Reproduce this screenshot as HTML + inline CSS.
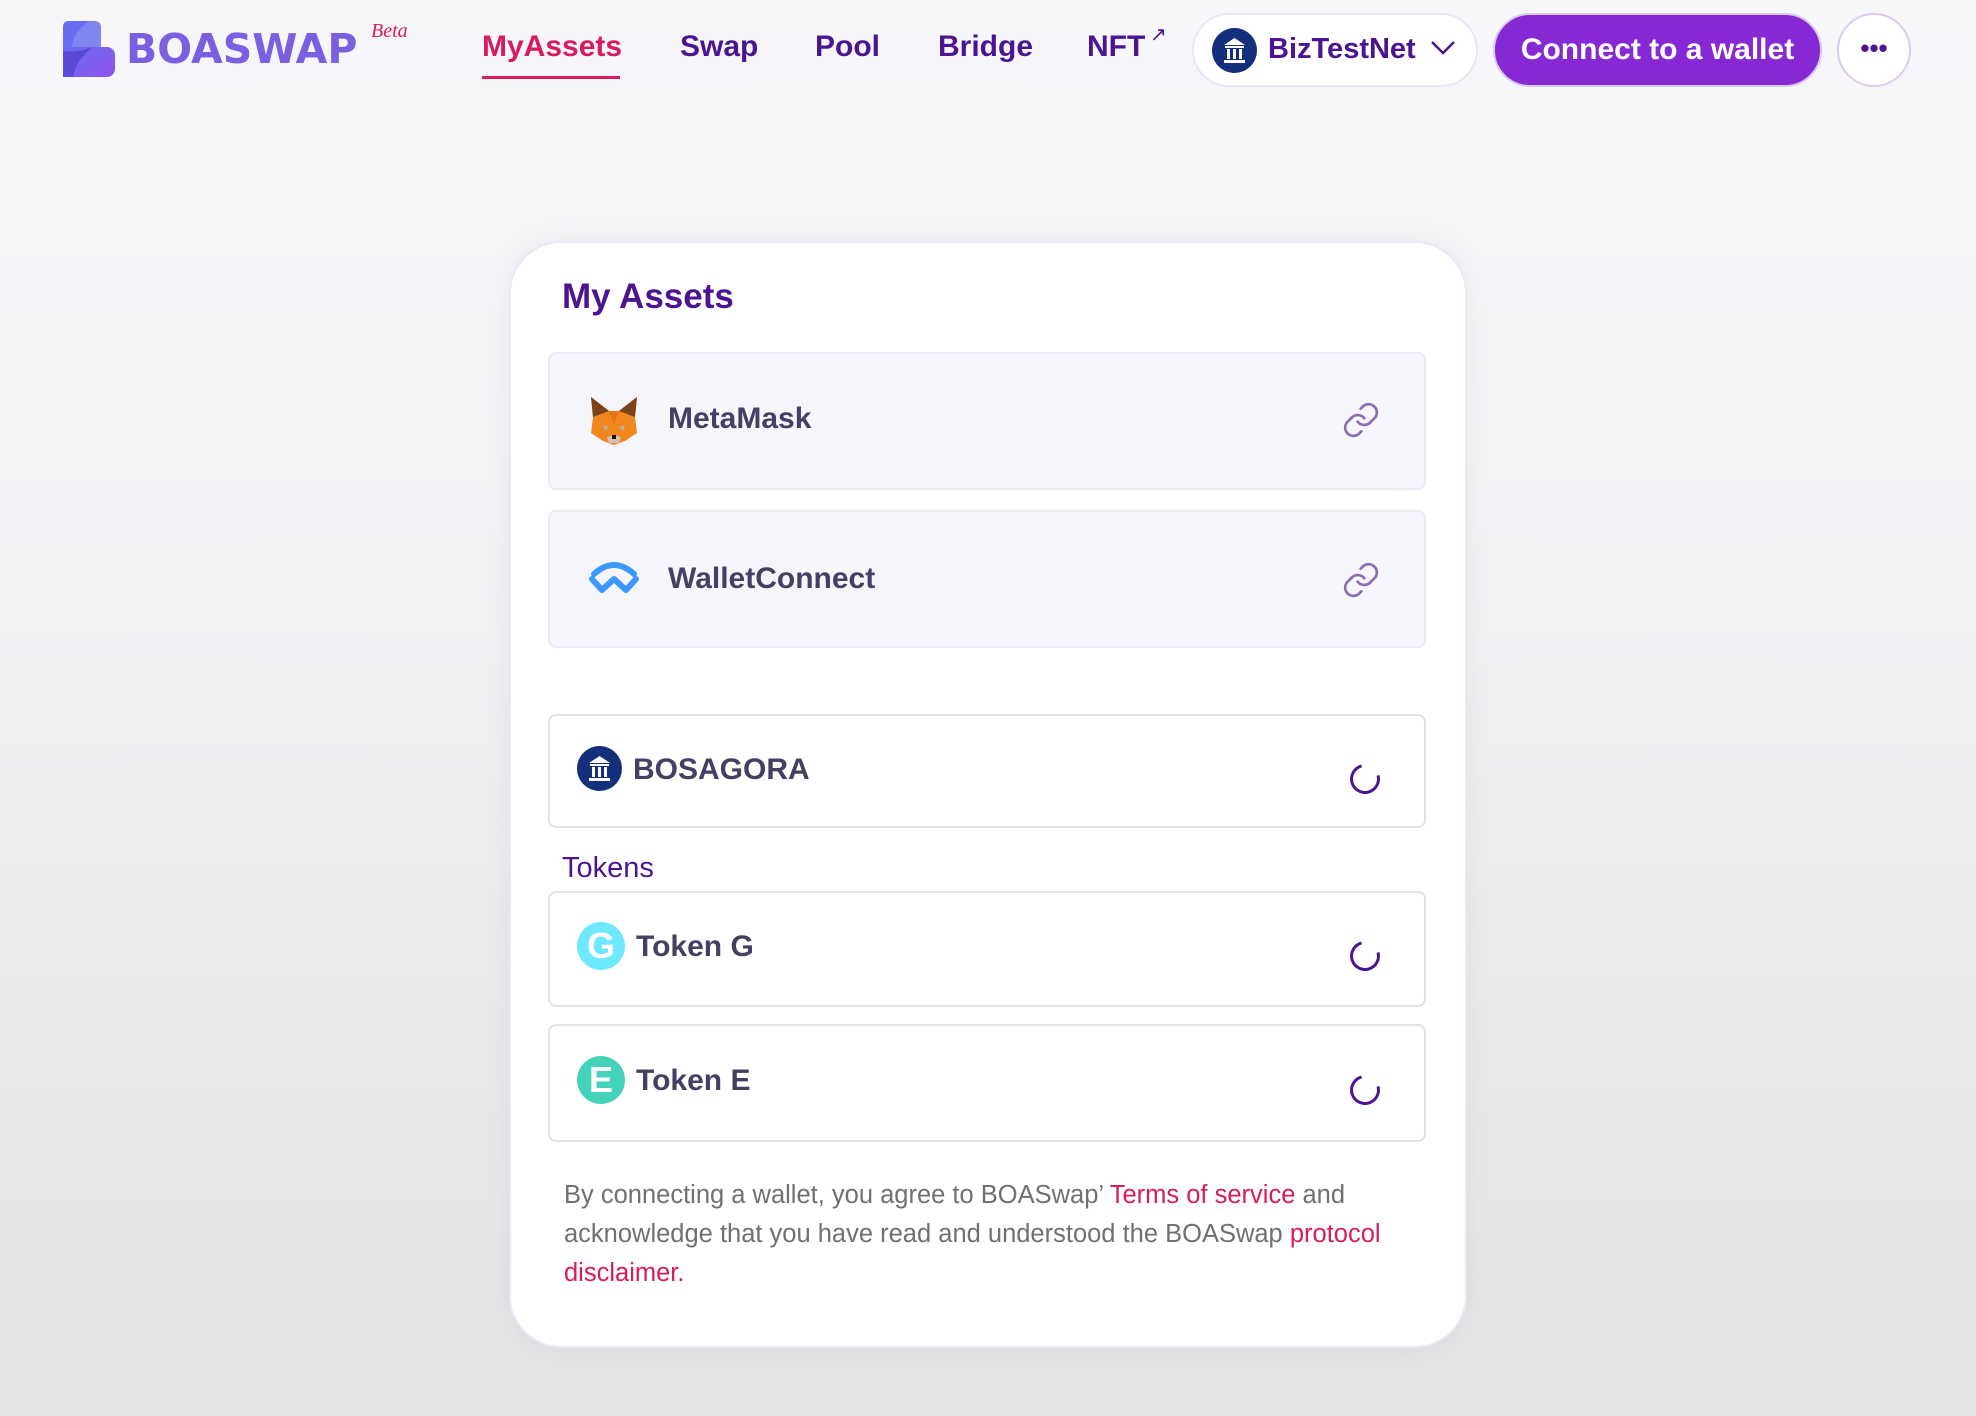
<!DOCTYPE html>
<html><head><meta charset="utf-8"><style>
*{box-sizing:border-box;margin:0;padding:0}
body{width:1976px;height:1416px;overflow:hidden;font-family:"Liberation Sans",Arial,sans-serif;background:linear-gradient(#f7f7fa 0%,#f2f2f5 40%,#e3e3e5 100%);position:relative}
.abs{position:absolute}
.nav{font-size:30px;color:#4b1490;top:30px;font-weight:bold}
.pill{position:absolute;top:13px;height:74px;border-radius:37px}
.card{left:509px;top:241px;width:958px;height:1107px;background:#fff;border:2px solid #ece6f7;border-radius:52px;box-shadow:0 0 30px rgba(0,0,0,.05)}
.wbox{position:absolute;left:548px;width:878px;height:138px;background:#f7f5fc;border:2px solid #ece8f6;border-radius:8px}
.tbox{position:absolute;left:548px;width:878px;background:#fff;border:2px solid #e2e2e4;border-radius:8px}
.lbl{position:absolute;font-size:30px;color:#454063;font-weight:bold}
.spin{position:absolute;width:30px;height:30px;border:3px solid #4b1490;border-top-color:transparent;border-radius:50%;transform:rotate(30deg)}
</style></head><body>
<svg class="abs" style="left:63px;top:21px" width="52" height="56" viewBox="0 0 52 56">
<defs><linearGradient id="g1" x1="0" y1="0" x2="1" y2="1"><stop offset="0" stop-color="#6a6cf2"/><stop offset="1" stop-color="#8f55ea"/></linearGradient></defs>
<rect x="0" y="0" width="38" height="30" rx="6" fill="#8185f0"/>
<path d="M0 6 Q0 0 6 0 L26 0 Q10 10 8 30 L0 30Z" fill="#6a6cf2"/>
<rect x="0" y="26" width="52" height="30" rx="8" fill="url(#g1)"/>
<path d="M0 56 L0 30 Q14 32 30 26 Q12 40 10 56Z" fill="#5a48d8"/>
</svg>
<div class="abs" style="left:126px;top:25px;font-size:41px;font-weight:bold;color:#7b5fe0;letter-spacing:0px;font-family:'DejaVu Sans',sans-serif">BOASWAP</div>
<div class="abs" style="left:371px;top:20px;font-size:20px;color:#d81b60;font-style:italic;font-family:'Liberation Serif',serif">Beta</div>
<div class="abs nav" style="left:482px;color:#d81b5c">MyAssets</div>
<div class="abs" style="left:482px;top:76px;width:138px;height:3px;background:#d81b5c"></div>
<div class="abs nav" style="left:680px">Swap</div>
<div class="abs nav" style="left:815px">Pool</div>
<div class="abs nav" style="left:938px">Bridge</div>
<div class="abs nav" style="left:1087px">NFT</div>
<div class="abs" style="left:1150px;top:22px;font-size:20px;color:#4b1490">↗</div>
<div class="pill" style="left:1192px;width:286px;background:#fff;border:2px solid #ece4f8"></div>
<svg class="abs" style="left:1212px;top:28px" width="45" height="45" viewBox="0 0 45 45"><circle cx="22.5" cy="22.5" r="22.5" fill="#14307a"/><path d="M12 17 L22.5 10 L33 17Z M13 18h19v2H13Z M15 21h3v10h-3Z M21 21h3v10h-3Z M27 21h3v10h-3Z M12 32h21v3H12Z" fill="#fff"/></svg>
<div class="abs" style="left:1268px;top:33px;font-size:29px;color:#4b1490;font-weight:bold">BizTestNet</div>
<svg class="abs" style="left:1430px;top:40px" width="26" height="16"><path d="M2 2 L13 13 L24 2" stroke="#4b1490" stroke-width="2.5" fill="none"/></svg>
<div class="pill" style="left:1493px;width:329px;background:#8629d4;border:2px solid #d8c9ec;color:#fff;font-size:30px;text-align:center;line-height:70px;font-weight:bold">Connect to a wallet</div>
<div class="pill" style="left:1837px;width:74px;background:#fff;border:2px solid #dcc9f4;text-align:center;line-height:66px;font-size:26px;color:#4b1490;font-weight:bold">•••</div>

<div class="abs card"></div>
<div class="abs" style="left:562px;top:277px;font-size:35px;color:#4b1490;font-weight:bold">My Assets</div>

<div class="wbox" style="top:352px"></div>
<svg class="abs" style="left:589px;top:395px" width="50" height="50" viewBox="0 0 50 50">
<path d="M2 2 L20 16 L30 16 L48 2 L46 22 L48 38 L36 46 L25 50 L14 46 L2 38 L4 22Z" fill="#f0861e"/>
<path d="M2 2 L20 16 L4 22Z M48 2 L30 16 L46 22Z" fill="#7a4416"/>
<path d="M20 16 L30 16 L25 30Z" fill="#e2761b"/>
<path d="M18 42 L25 40 L32 42 L30 48 L20 48Z" fill="#d7c1b3"/>
<path d="M23 40h4v4h-4Z" fill="#161616"/>
<path d="M14 30 L20 32 L16 36Z M36 30 L30 32 L34 36Z" fill="#c0ad9e"/>
</svg>
<div class="lbl" style="left:668px;top:402px">MetaMask</div>
<svg class="abs" style="left:1341px;top:400px" width="40" height="40" viewBox="0 0 24 24" fill="none" stroke="#8a6db3" stroke-width="1.6" stroke-linecap="round"><path d="M10 13a5 5 0 0 0 7.5.5l3-3a5 5 0 0 0-7-7l-1.7 1.7"/><path d="M14 11a5 5 0 0 0-7.5-.5l-3 3a5 5 0 0 0 7 7l1.7-1.7"/></svg>

<div class="wbox" style="top:510px"></div>
<svg class="abs" style="left:589px;top:562px" width="50" height="34" viewBox="0 0 50 34"><path d="M5 12 Q25 -6 45 12" stroke="#3b99fc" stroke-width="6" fill="none" stroke-linecap="round"/><path d="M3 17 L13 28 L25 17 L37 28 L47 17" stroke="#3b99fc" stroke-width="6" fill="none" stroke-linejoin="round" stroke-linecap="round"/></svg>
<div class="lbl" style="left:668px;top:562px">WalletConnect</div>
<svg class="abs" style="left:1341px;top:560px" width="40" height="40" viewBox="0 0 24 24" fill="none" stroke="#8a6db3" stroke-width="1.6" stroke-linecap="round"><path d="M10 13a5 5 0 0 0 7.5.5l3-3a5 5 0 0 0-7-7l-1.7 1.7"/><path d="M14 11a5 5 0 0 0-7.5-.5l-3 3a5 5 0 0 0 7 7l1.7-1.7"/></svg>

<div class="tbox" style="top:714px;height:114px"></div>
<svg class="abs" style="left:577px;top:746px" width="45" height="45" viewBox="0 0 45 45"><circle cx="22.5" cy="22.5" r="22.5" fill="#14307a"/><path d="M12 17 L22.5 10 L33 17Z M13 18h19v2H13Z M15 21h3v10h-3Z M21 21h3v10h-3Z M27 21h3v10h-3Z M12 32h21v3H12Z" fill="#fff"/></svg>
<div class="lbl" style="left:633px;top:753px">BOSAGORA</div>
<div class="spin" style="left:1350px;top:764px"></div>

<div class="abs" style="left:562px;top:852px;font-size:29px;color:#4b1490">Tokens</div>

<div class="tbox" style="top:891px;height:116px"></div>
<div class="abs" style="left:577px;top:922px;width:48px;height:48px;border-radius:50%;background:#6ee8fd;color:#fff;font-size:36px;font-weight:bold;text-align:center;line-height:48px">G</div>
<div class="lbl" style="left:636px;top:930px">Token G</div>
<div class="spin" style="left:1350px;top:941px"></div>

<div class="tbox" style="top:1024px;height:118px"></div>
<div class="abs" style="left:577px;top:1056px;width:48px;height:48px;border-radius:50%;background:#45d2bb;color:#fff;font-size:36px;font-weight:bold;text-align:center;line-height:48px">E</div>
<div class="lbl" style="left:636px;top:1064px">Token E</div>
<div class="spin" style="left:1350px;top:1075px"></div>

<div class="abs" style="left:564px;top:1176px;width:860px;font-size:25.5px;line-height:39px;color:#707070">By connecting a wallet, you agree to BOASwap’ <span style="color:#d81b5c">Terms of service</span> and acknowledge that you have read and understood the BOASwap <span style="color:#d81b5c">protocol disclaimer.</span></div>
</body></html>
